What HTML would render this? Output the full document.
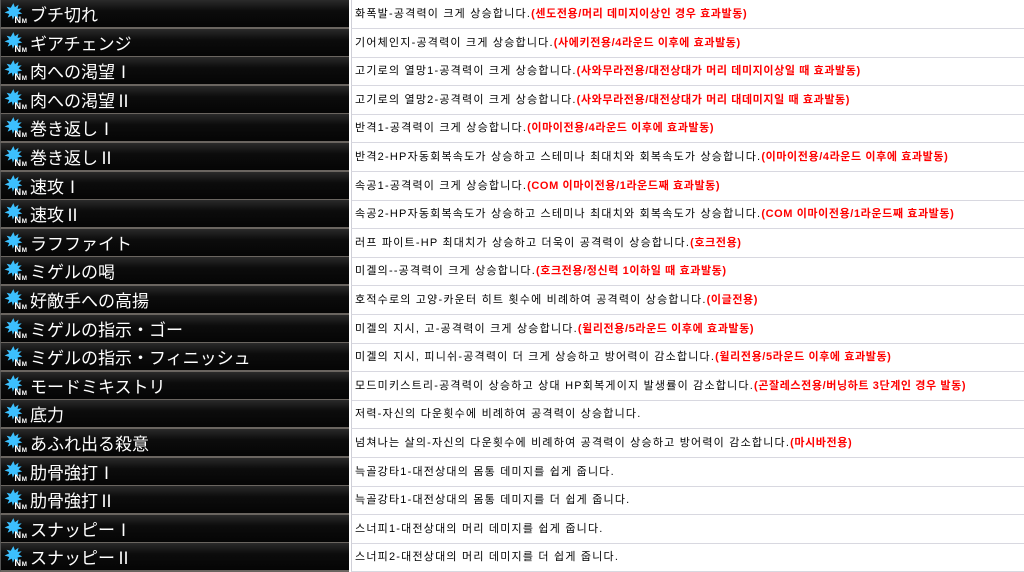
<!DOCTYPE html><html><head><meta charset="utf-8"><style>
body{margin:0;width:1024px;height:572px;overflow:hidden;background:#fff;font-family:"Liberation Sans","Noto Sans CJK KR",sans-serif}
.r{position:absolute;left:0;width:1024px;height:29px}
.l{position:absolute;left:0;top:0;width:348px;height:27px;background:linear-gradient(#2a2a2a,#0c0c0c 40%,#050505);border-bottom:2px solid #6a6560;border-left:1px solid #555}
.l span{position:absolute;left:29px;top:2px;color:#fff;font-size:17px;font-family:"Noto Sans CJK JP",sans-serif;line-height:24px}
.ic{position:absolute;left:3px;top:3px;width:25px;height:21px}
.t{position:absolute;left:351px;top:0;width:673px;height:28px;border-bottom:1px solid #d8d8e0;border-left:1px solid #d0d0d8;font-size:11px;line-height:28px;padding-left:3px;color:#000;letter-spacing:1.2px;white-space:nowrap}
.t b{color:#f00;font-weight:bold;letter-spacing:.6px}
</style></head><body>
<svg width="0" height="0" style="position:absolute"><defs><g id="i"><polygon points="9,0 10.5,4 14,1.5 13,5.5 17,5 14,8 17.5,10 13,11 14,14.5 10,12.5 8.5,16 7.5,12 3.5,14 5,10.5 0.5,9 5,7 2.5,3.5 6.5,4.5" fill="#3cc0ff"/><text x="10" y="19" font-size="9" font-weight="bold" fill="#fff" font-family="Liberation Sans">N</text><text x="17" y="19" font-size="6" font-weight="bold" fill="#fff" font-family="Liberation Sans">M</text></g></defs></svg>
<div id="c"></div>
<script>
var d=[["ブチ切れ","화폭발-공격력이 크게 상승합니다.","(센도전용/머리 데미지이상인 경우 효과발동)"],
["ギアチェンジ","기어체인지-공격력이 크게 상승합니다.","(사에키전용/4라운드 이후에 효과발동)"],
["肉への渇望Ⅰ","고기로의 열망1-공격력이 크게 상승합니다.","(사와무라전용/대전상대가 머리 데미지이상일 때 효과발동)"],
["肉への渇望Ⅱ","고기로의 열망2-공격력이 크게 상승합니다.","(사와무라전용/대전상대가 머리 대데미지일 때 효과발동)"],
["巻き返しⅠ","반격1-공격력이 크게 상승합니다.","(이마이전용/4라운드 이후에 효과발동)"],
["巻き返しⅡ","반격2-HP자동회복속도가 상승하고 스테미나 최대치와 회복속도가 상승합니다.","(이마이전용/4라운드 이후에 효과발동)"],
["速攻Ⅰ","속공1-공격력이 크게 상승합니다.","(COM 이마이전용/1라운드째 효과발동)"],
["速攻Ⅱ","속공2-HP자동회복속도가 상승하고 스테미나 최대치와 회복속도가 상승합니다.","(COM 이마이전용/1라운드째 효과발동)"],
["ラフファイト","러프 파이트-HP 최대치가 상승하고 더욱이 공격력이 상승합니다.","(호크전용)"],
["ミゲルの喝","미겔의--공격력이 크게 상승합니다.","(호크전용/정신력 1이하일 때 효과발동)"],
["好敵手への高揚","호적수로의 고양-카운터 히트 횟수에 비례하여 공격력이 상승합니다.","(이글전용)"],
["ミゲルの指示・ゴー","미겔의 지시, 고-공격력이 크게 상승합니다.","(윌리전용/5라운드 이후에 효과발동)"],
["ミゲルの指示・フィニッシュ","미겔의 지시, 피니쉬-공격력이 더 크게 상승하고 방어력이 감소합니다.","(윌리전용/5라운드 이후에 효과발동)"],
["モードミキストリ","모드미키스트리-공격력이 상승하고 상대 HP회복게이지 발생률이 감소합니다.","(곤잘레스전용/버닝하트 3단계인 경우 발동)"],
["底力","저력-자신의 다운횟수에 비례하여 공격력이 상승합니다.",""],
["あふれ出る殺意","넘쳐나는 살의-자신의 다운횟수에 비례하여 공격력이 상승하고 방어력이 감소합니다.","(마시바전용)"],
["肋骨強打Ⅰ","늑골강타1-대전상대의 몸통 데미지를 쉽게 줍니다.",""],
["肋骨強打Ⅱ","늑골강타1-대전상대의 몸통 데미지를 더 쉽게 줍니다.",""],
["スナッピーⅠ","스너피1-대전상대의 머리 데미지를 쉽게 줍니다.",""],
["スナッピーⅡ","스너피2-대전상대의 머리 데미지를 더 쉽게 줍니다.",""]];
var h="";d.forEach(function(e,i){h+='<div class="r" style="top:'+(i*28.6).toFixed(1)+'px"><div class="l"><svg class="ic" viewBox="0 0 24 20"><use href="#i"/></svg><span>'+e[0]+'</span></div><div class="t">'+e[1]+'<b>'+e[2]+'</b></div></div>'});
document.getElementById("c").innerHTML=h;
</script></body></html>
